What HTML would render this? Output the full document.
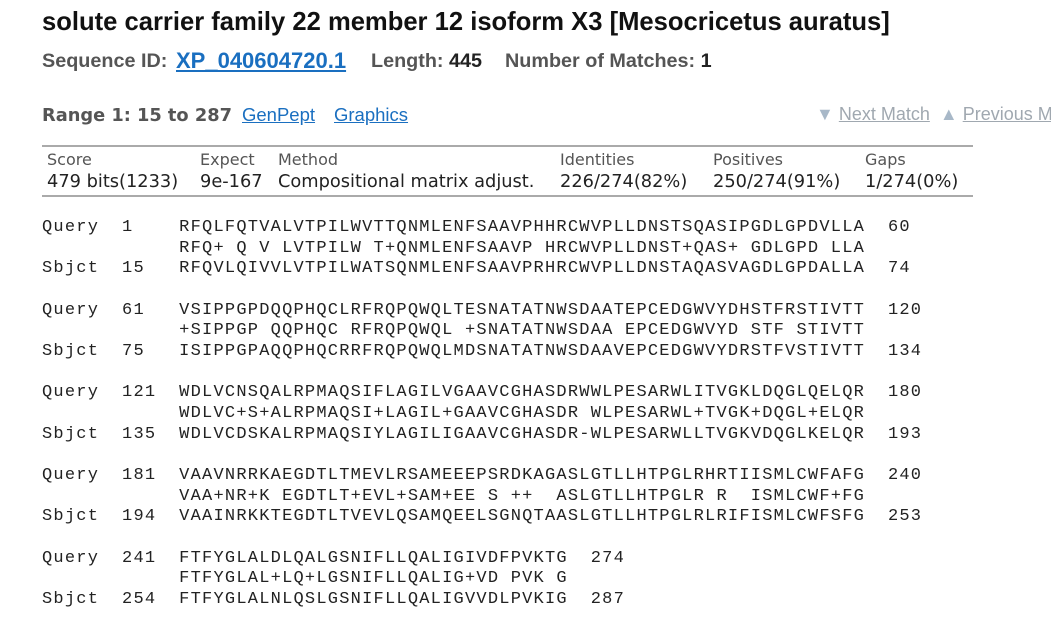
<!DOCTYPE html>
<html><head><meta charset="utf-8"><style>
body{margin:0;width:1051px;height:638px;background:#fff;position:relative;overflow:hidden;font-family:"Liberation Sans",sans-serif}
.a{position:absolute;white-space:nowrap}
h1{position:absolute;left:42px;top:8px;margin:0;font-size:25.6px;font-weight:bold;color:#111}
.sid{top:50px;font-size:19.8px;font-weight:bold;color:#555}
.sid b{color:#222}
.lnk{top:48px;font-size:22px;font-weight:bold;color:#1a6fc0;text-decoration:underline}
.rng{left:42px;top:105px;font-weight:bold;color:#555;font-family:"DejaVu Sans",sans-serif;font-size:17.8px}
.rl{top:104px;font-size:18.5px;color:#1a6fc0;text-decoration:underline}
.nav{left:816px;top:104px;font-size:18px;color:#a8b8c8}
.nav u{color:#a0a8b0}
.rule{position:absolute;left:42px;width:931px;height:0;border-top:2px solid #aaa}
.t{font-family:"DejaVu Sans",sans-serif;font-size:16px;color:#555}
.v{font-family:"DejaVu Sans",sans-serif;font-size:17.8px;color:#222}
pre{position:absolute;left:42px;top:218px;margin:0;font-family:"Liberation Mono",monospace;font-size:17px;letter-spacing:1.23px;line-height:20.65px;color:#222}
</style></head><body>
<h1>solute carrier family 22 member 12 isoform X3 [Mesocricetus auratus]</h1>
<div class="a sid" style="left:42px">Sequence ID:</div>
<div class="a lnk" style="left:176px">XP_040604720.1</div>
<div class="a sid" style="left:371px">Length: <b>445</b></div>
<div class="a sid" style="left:505px">Number of Matches: <b>1</b></div>
<div class="a rng">Range 1: 15 to 287</div>
<div class="a rl" style="left:242px">GenPept</div>
<div class="a rl" style="left:334px">Graphics</div>
<div class="a nav">▼ <u>Next Match</u> &nbsp;▲ <u>Previous Match</u></div>
<div class="rule" style="top:145px"></div>
<div class="rule" style="top:195px"></div>
<div class="a t" style="left:47px;top:150px">Score</div>
<div class="a t" style="left:200px;top:150px">Expect</div>
<div class="a t" style="left:278px;top:150px">Method</div>
<div class="a t" style="left:560px;top:150px">Identities</div>
<div class="a t" style="left:713px;top:150px">Positives</div>
<div class="a t" style="left:865px;top:150px">Gaps</div>
<div class="a v" style="left:47px;top:171px">479 bits(1233)</div>
<div class="a v" style="left:200px;top:171px">9e-167</div>
<div class="a v" style="left:278px;top:171px">Compositional matrix adjust.</div>
<div class="a v" style="left:560px;top:171px">226/274(82%)</div>
<div class="a v" style="left:713px;top:171px">250/274(91%)</div>
<div class="a v" style="left:865px;top:171px">1/274(0%)</div>
<pre>Query  1    RFQLFQTVALVTPILWVTTQNMLENFSAAVPHHRCWVPLLDNSTSQASIPGDLGPDVLLA  60
            RFQ+ Q V LVTPILW T+QNMLENFSAAVP HRCWVPLLDNST+QAS+ GDLGPD LLA
Sbjct  15   RFQVLQIVVLVTPILWATSQNMLENFSAAVPRHRCWVPLLDNSTAQASVAGDLGPDALLA  74

Query  61   VSIPPGPDQQPHQCLRFRQPQWQLTESNATATNWSDAATEPCEDGWVYDHSTFRSTIVTT  120
            +SIPPGP QQPHQC RFRQPQWQL +SNATATNWSDAA EPCEDGWVYD STF STIVTT
Sbjct  75   ISIPPGPAQQPHQCRRFRQPQWQLMDSNATATNWSDAAVEPCEDGWVYDRSTFVSTIVTT  134

Query  121  WDLVCNSQALRPMAQSIFLAGILVGAAVCGHASDRWWLPESARWLITVGKLDQGLQELQR  180
            WDLVC+S+ALRPMAQSI+LAGIL+GAAVCGHASDR WLPESARWL+TVGK+DQGL+ELQR
Sbjct  135  WDLVCDSKALRPMAQSIYLAGILIGAAVCGHASDR-WLPESARWLLTVGKVDQGLKELQR  193

Query  181  VAAVNRRKAEGDTLTMEVLRSAMEEEPSRDKAGASLGTLLHTPGLRHRTIISMLCWFAFG  240
            VAA+NR+K EGDTLT+EVL+SAM+EE S ++  ASLGTLLHTPGLR R  ISMLCWF+FG
Sbjct  194  VAAINRKKTEGDTLTVEVLQSAMQEELSGNQTAASLGTLLHTPGLRLRIFISMLCWFSFG  253

Query  241  FTFYGLALDLQALGSNIFLLQALIGIVDFPVKTG  274
            FTFYGLAL+LQ+LGSNIFLLQALIG+VD PVK G
Sbjct  254  FTFYGLALNLQSLGSNIFLLQALIGVVDLPVKIG  287</pre>
</body></html>
